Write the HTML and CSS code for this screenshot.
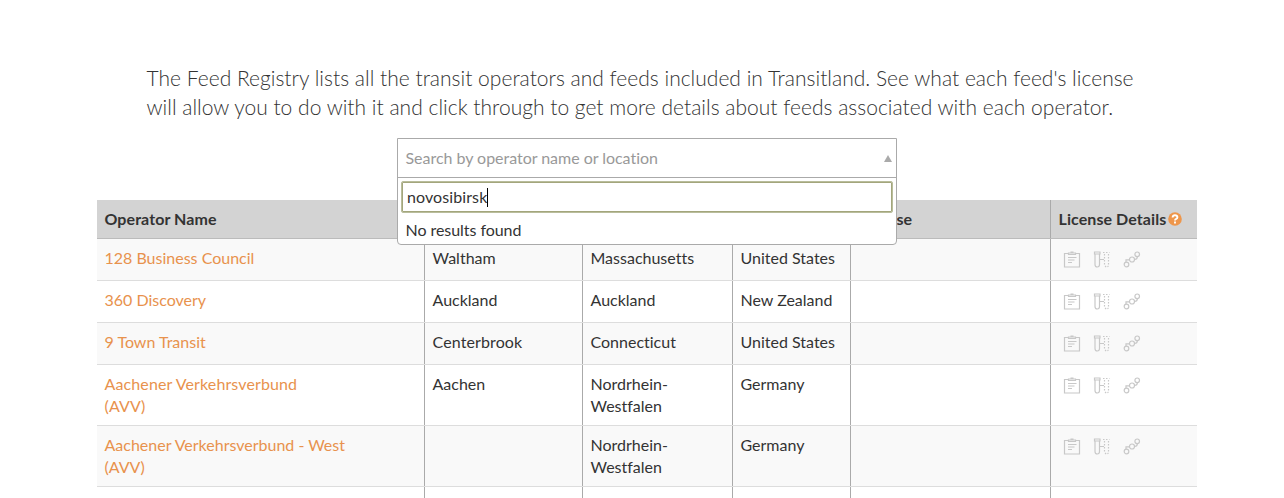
FILE: index.html
```
<!DOCTYPE html>
<html lang="en">
<head>
<meta charset="utf-8">
<title>Feed Registry</title>
<link rel="stylesheet" href="styles.css">
</head>
<body>
<svg class="sprites" aria-hidden="true">
  <symbol id="clipboard" viewBox="0 0 18 18"><path d="M5 2.500H1.500v13.500h15V2.500H13M5.500 2h7v1.500h-7zM7.500 1h3M5 6.500h8.500M5 9h6.500M5 11.500h4"/></symbol>
  <symbol id="tube" viewBox="0 0 18 18"><path d="M1.500 1h5.500v2H1.500zM2 3v10.500Q2 16 4.250 16T6.500 13.500V3M6.500 8.500h4.500"/><path stroke-dasharray="1.500 1.500" d="M10 1.500h6.500M11.500 3v11M15.500 3v11M12 15l1.500 1.200 2-1.200"/></symbol>
  <symbol id="route" viewBox="0 0 18 18"><circle cx="3.500" cy="13.500" r="2.300"/><circle cx="9" cy="8.500" r="2.500"/><circle cx="14.200" cy="3.300" r="2.300"/><path d="M3 11.200V8.800h3.500M11.500 8.500q2.900 0 2.900-2.900"/></symbol>
</svg>
<main class="page">
  <p class="intro">The Feed Registry lists all the transit operators and feeds included in Transitland. See what each feed's license<br>will allow you to do with it and click through to get more details about feeds associated with each operator.</p>
  <div class="search">
    <div class="selection"><span>Search by operator name or location</span><i class="arrow"></i></div>
    <div class="dropdown">
      <div class="field">novosibirsk<i class="caret"></i></div>
      <div class="message">No results found</div>
    </div>
  </div>
  <div class="table">
    <div class="row head"><div>Operator Name</div><div></div><div></div><div></div><div>License</div><div class="details">License Details<svg class="help" viewBox="0 0 14 14"><circle cx="7" cy="7" r="6.800"/><path d="M4.600 5.500q.200-2.300 2.400-2.300t2.400 2q0 1-1.200 1.600Q7 7.300 7 8.500M7 9.600v1.800"/></svg></div></div>
    <div class="row odd"><div><a>128 Business Council</a></div><div>Waltham</div><div>Massachusetts</div><div>United States</div><div></div><div class="icons"><svg><use href="#clipboard"/></svg><svg><use href="#tube"/></svg><svg><use href="#route"/></svg></div></div>
    <div class="row"><div><a>360 Discovery</a></div><div>Auckland</div><div>Auckland</div><div>New Zealand</div><div></div><div class="icons"><svg><use href="#clipboard"/></svg><svg><use href="#tube"/></svg><svg><use href="#route"/></svg></div></div>
    <div class="row odd"><div><a>9 Town Transit</a></div><div class="loose">Centerbrook</div><div>Connecticut</div><div>United States</div><div></div><div class="icons"><svg><use href="#clipboard"/></svg><svg><use href="#tube"/></svg><svg><use href="#route"/></svg></div></div>
    <div class="row"><div class="loose"><a>Aachener Verkehrsverbund<br>(AVV)</a></div><div>Aachen</div><div>Nordrhein-<br>Westfalen</div><div>Germany</div><div></div><div class="icons"><svg><use href="#clipboard"/></svg><svg><use href="#tube"/></svg><svg><use href="#route"/></svg></div></div>
    <div class="row odd"><div><a>Aachener Verkehrsverbund - West<br>(AVV)</a></div><div></div><div>Nordrhein-<br>Westfalen</div><div>Germany</div><div></div><div class="icons"><svg><use href="#clipboard"/></svg><svg><use href="#tube"/></svg><svg><use href="#route"/></svg></div></div>
    <div class="row last"><div></div><div></div><div></div><div></div><div></div><div></div></div>
  </div>
</main>
</body>
</html>
```
FILE: styles.css
```
* { box-sizing: border-box; }
body {
  margin: 0;
  background: #fff;
  color: #333;
  font: 16px/22px Lato, sans-serif;
  font-variant-ligatures: none;
}
.sprites { display: none; }
.page {
  position: relative;
  width: 1100px;
  margin-left: 97px;
  padding-top: 63px;
}
.intro {
  height: 58px;
  margin: 0 0 79px 49.500px;
  font-size: 21px;
  font-weight: 300;
  line-height: 29px;
  letter-spacing: .01px;
  white-space: nowrap;
}
.search {
  position: absolute;
  z-index: 1;
  top: 138px;
  left: 300px;
  width: 500px;
  height: 107px;
  border: 1px solid #aaa;
  border-radius: 0 0 4px 4px;
  background: #fff;
}
.selection {
  display: flex;
  align-items: center;
  justify-content: space-between;
  height: 38px;
  padding: 0 4px 0 7.500px;
  color: #999;
  letter-spacing: -.03px;
}
.arrow {
  border: 4px solid transparent;
  border-top: 0;
  border-bottom: 7px solid #aaa;
}
.dropdown {
  padding: 3px;
  border-top: 1px solid #aaa;
}
.field {
  display: flex;
  align-items: center;
  height: 32px;
  padding-left: 5px;
  border: 1px solid #b9bd9c;
  border-radius: 2px;
  box-shadow: inset 0 0 0 1px #a3a67c;
  letter-spacing: .1px;
}
.caret {
  width: 1px;
  height: 19px;
  background: #000;
}
.message {
  padding: 6px 4.500px;
  letter-spacing: -.05px;
}
.row {
  display: grid;
  grid-template-columns: 328px 158px 150px 118px 200px 146px;
  min-height: 42px;
  border-bottom: 1px solid #ddd;
}
.row > div {
  padding: 8px 7.500px;
  border-right: 1px solid #aaa;
  white-space: nowrap;
}
.row > div:last-child { border-right: 0; }
.odd { background: #f9f9f9; }
.head {
  min-height: 39px;
  border-bottom-color: #bbb;
  background: #d3d3d3;
  font-weight: 700;
  letter-spacing: .08px;
}
.last {
  height: 11px;
  min-height: 0;
  border-bottom: 0;
}
.last > div { padding: 0; }
.loose { letter-spacing: .12px; }
a { color: #e8924d; }
.row > .details {
  display: flex;
  align-items: center;
  gap: 2px;
}
.help {
  width: 14px;
  height: 14px;
  fill: #ee964b;
}
.help path {
  fill: none;
  stroke: #fff;
  stroke-width: 1.900;
}
.row > .icons {
  display: flex;
  gap: 12px;
  padding: 12px 0 0 11.500px;
}
.icons svg {
  width: 18px;
  height: 18px;
  fill: none;
  stroke: #c8c8c8;
  stroke-width: 1.200;
}
```
